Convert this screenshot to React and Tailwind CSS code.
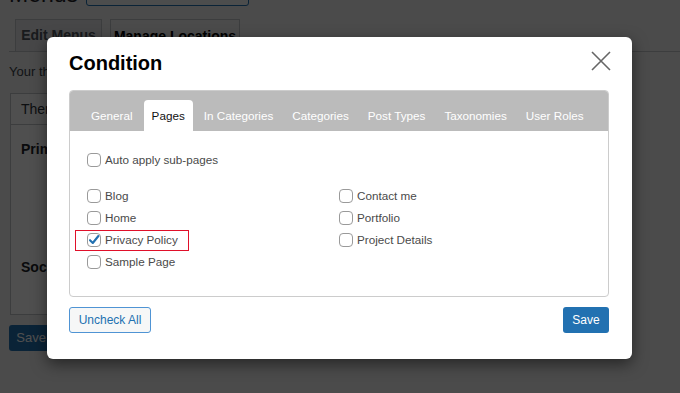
import React from "react";

function Box({ checked }) {
  return (
    <span className="relative flex h-[14px] w-[14px] shrink-0 items-center justify-center rounded-[4px] border border-[#9a9a9a] bg-white">
      {checked && (
        <svg width="14" height="14" viewBox="0 0 14 14" className="absolute left-[-1px] top-[-1px]">
          <path d="M3 7.2 L5.8 10 L11.4 3" fill="none" stroke="#2271b1" strokeWidth="2.1" strokeLinecap="round" strokeLinejoin="round" />
        </svg>
      )}
    </span>
  );
}

function Item({ label, checked, marked }) {
  return (
    <div className="relative flex h-[22px] items-center gap-[4px] text-[11.7px] text-[#4a4a4a]">
      {marked && <span className="absolute left-[-12px] top-[1px] h-[21px] w-[114px] border border-[#e0102a]" />}
      <Box checked={checked} />
      <span>{label}</span>
    </div>
  );
}

export default function App() {
  const tabs = ["General", "Pages", "In Categories", "Categories", "Post Types", "Taxonomies", "User Roles"];
  return (
    <div className="relative h-[393px] w-[680px] overflow-hidden bg-[#f0f0f1] font-['Liberation_Sans',Arial,sans-serif]">
      {/* background admin page */}
      <div className="-mt-[24px] pl-[9px]">
        <div className="flex items-start gap-[8px]">
          <h1 className="mt-[3px] text-[23px] leading-[30px] text-[#1d2327]">Menus</h1>
          <div className="flex h-[30px] w-[163px] items-center justify-center rounded-[3px] border border-[#2271b1] bg-[#f6f7f7] text-[13px] text-[#2271b1]">
            Manage with Live Preview
          </div>
        </div>
        <div className="mt-[10px] flex gap-[8px] border-b border-[#c3c4c7] pl-[6px]">
          <div className="flex h-[32px] w-[87px] items-center justify-center border border-b-0 border-[#c3c4c7] bg-[#e6e6e8] text-[14px] font-semibold text-[#50575e]">
            Edit Menus
          </div>
          <div className="-mb-px flex h-[33px] w-[130px] items-center justify-center border border-b-0 border-[#c3c4c7] bg-[#f0f0f1] text-[14px] font-semibold text-black">
            Manage Locations
          </div>
        </div>
        <p className="mt-[10px] text-[13px] leading-[20px] text-[#3c434a]">
          Your theme supports 2 menus. Select which menu appears in each location.
        </p>
        <div className="ml-[1px] mt-[11px] h-[222px] w-[520px] border border-[#c3c4c7] bg-white">
          <div className="flex h-[31px] items-center border-b border-[#c3c4c7] px-[10px] text-[14px] text-[#2c3338]">
            Theme Location
          </div>
          <div className="px-[10px] pt-[14px] text-[14px] font-semibold text-[#1d2327]">Primary Menu</div>
          <div className="px-[10px] pt-[97px] text-[14px] font-semibold text-[#1d2327]">Social Menu</div>
        </div>
        <div className="mt-[10px] flex h-[26px] w-[100px] items-center justify-center rounded-[3px] bg-[#2271b1] text-[13px] text-white">
          Save Changes
        </div>
      </div>

      {/* overlay */}
      <div className="absolute inset-0 bg-black/[0.69]" />

      {/* modal */}
      <div className="absolute inset-0 flex items-center justify-center pr-[1px] pt-[2px]">
        <div className="w-[585px] rounded-[6px] bg-white pb-[26px] pl-[22px] pr-[23px] pt-[14px] shadow-[0_5px_15px_rgba(0,0,0,0.5)]">
          <div className="flex items-start justify-between">
            <h2 className="text-[20px] font-bold leading-[24px] text-black">Condition</h2>
            <svg width="20" height="20" viewBox="0 0 20 20" className="-mr-[2px]">
              <path d="M1 1 L19 19 M19 1 L1 19" stroke="#666" strokeWidth="1.6" />
            </svg>
          </div>
          <div className="mt-[15px] overflow-hidden rounded-[4px] border border-[#cccccc]">
            <div className="flex h-[40px] items-end gap-[3px] bg-[#bbbbbb] pl-[13px]">
              {tabs.map((t) => (
                <div
                  key={t}
                  className={
                    t === "Pages"
                      ? "flex h-[31px] items-center rounded-t-[4px] bg-white px-[8px] pt-[1px] text-[11.7px] text-[#111]"
                      : "flex h-[31px] items-center px-[8px] pt-[1px] text-[11.7px] text-white"
                  }
                >
                  {t}
                </div>
              ))}
            </div>
            <div className="px-[17px] pb-[23px] pt-[18px]">
              <Item label="Auto apply sub-pages" />
              <div className="mt-[14px] grid grid-cols-2">
                <div className="flex flex-col">
                  <Item label="Blog" />
                  <Item label="Home" />
                  <Item label="Privacy Policy" checked marked />
                  <Item label="Sample Page" />
                </div>
                <div className="flex flex-col">
                  <Item label="Contact me" />
                  <Item label="Portfolio" />
                  <Item label="Project Details" />
                </div>
              </div>
            </div>
          </div>
          <div className="mt-[10px] flex justify-between">
            <div className="flex h-[26px] w-[82px] items-center justify-center rounded-[3px] border border-[#4f94d4] bg-[#f6f7f7] text-[12px] text-[#2271b1]">
              Uncheck All
            </div>
            <div className="flex h-[26px] w-[46px] items-center justify-center rounded-[3px] bg-[#2271b1] text-[12px] text-white">
              Save
            </div>
          </div>
        </div>
      </div>
    </div>
  );
}
